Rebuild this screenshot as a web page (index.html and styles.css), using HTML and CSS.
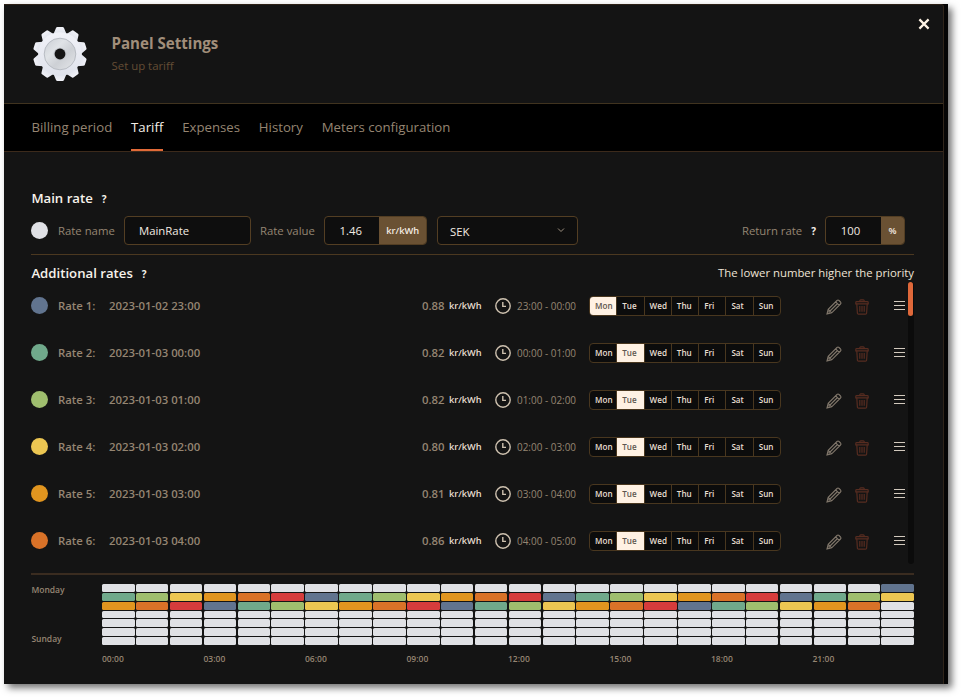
FILE: index.html
```html
<!DOCTYPE html>
<html lang="en">
<head>
<meta charset="utf-8">
<title>Panel Settings</title>
<link rel="stylesheet" href="styles.css">
</head>
<body>
<svg class="defs" aria-hidden="true">
  <symbol id="clock" viewBox="0 0 16 16"><circle cx="8" cy="8" r="7.2"/><path d="M7.8 4V8.4H11"/></symbol>
  <symbol id="pencil" viewBox="0 0 16 16"><path d="M1 15 2.2 10.3 11 1.5Q12 .6 13 1.5L14.5 3Q15.4 4 14.5 5L5.7 13.8ZM2.2 10.3 5.7 13.8M9.7 2.8 13.2 6.3M4 12 11.5 4.5M2.5 12.5 3.5 13.5"/></symbol>
  <symbol id="trash" viewBox="0 0 14 16"><path d="M4.8 2.6V1.7Q4.8.8 5.7.8H8.3Q9.2.8 9.2 1.7V2.6M1.7 2.7H12.3Q13.2 2.7 13.2 3.5V4.8H.8V3.5Q.8 2.7 1.7 2.7ZM1.8 5 2.4 14.3Q2.5 15.2 3.4 15.2H10.6Q11.5 15.2 11.6 14.3L12.2 5M4.8 7V12.8M7 7V12.8M9.2 7V12.8"/></symbol>
</svg>
<div class="screen">
  <main class="dialog">
    <header class="header">
      <svg class="gear" viewBox="-28 -28 56 56">
        <defs>
          <linearGradient id="metal" x1="0" y1="0" x2="0" y2="1"><stop offset="0" stop-color="#f1f2f8"/><stop offset="1" stop-color="#e0e3ec"/></linearGradient>
          <linearGradient id="disc" x1="0" y1="0" x2="1" y2="1"><stop offset="0" stop-color="#c9cdd3"/><stop offset=".35" stop-color="#e0e3e7"/><stop offset=".6" stop-color="#cdd0d5"/><stop offset="1" stop-color="#e5e7ea"/></linearGradient>
          <path id="tooth" d="M-6.5-20-4-26Q-3.6-27-2.6-27H2.6Q3.6-27 4-26L6.5-20Z"/>
        </defs>
        <g fill="url(#metal)">
          <use href="#tooth"/><use href="#tooth" transform="rotate(36)"/><use href="#tooth" transform="rotate(72)"/><use href="#tooth" transform="rotate(108)"/><use href="#tooth" transform="rotate(144)"/><use href="#tooth" transform="rotate(180)"/><use href="#tooth" transform="rotate(216)"/><use href="#tooth" transform="rotate(252)"/><use href="#tooth" transform="rotate(288)"/><use href="#tooth" transform="rotate(324)"/>
          <circle r="21.8"/>
        </g>
        <circle r="15.8" fill="url(#disc)" stroke="#b9bdc4"/>
        <circle r="6.3" fill="#c3c6cc"/><circle r="5.4" fill="#151515"/>
      </svg>
      <div class="heading"><h1>Panel Settings</h1><p>Set up tariff</p></div>
      <svg class="close" viewBox="0 0 12 12"><path d="M1.4 1.4 10.6 10.6M10.6 1.4 1.4 10.6"/></svg>
    </header>
    <nav class="tabs"><a>Billing period</a><a class="active">Tariff</a><a>Expenses</a><a>History</a><a>Meters configuration</a></nav>
    <section class="content">
      <h2>Main rate <b>?</b></h2>
      <div class="main-rate">
        <i class="dot c0"></i><label class="name-label">Rate name</label><div class="field name">MainRate</div>
        <label class="value-label">Rate value</label><div class="field value"><span>1.46</span><em>kr/kWh</em></div>
        <div class="field select"><span>SEK</span><svg viewBox="0 0 8 6"><path d="M1 1.5 4 4.5 7 1.5"/></svg></div>
        <label class="return-label">Return rate</label><b class="help">?</b><div class="field return"><span>100</span><em>%</em></div>
      </div>
      <div class="additional"><h2>Additional rates <b>?</b></h2><p>The lower number higher the priority</p></div>
      <div class="rates"><div class="rate-list" id="rates"></div><div class="track"><div class="thumb"></div></div></div>
      <div class="schedule">
        <div class="day-labels"><span>Monday</span><span>Sunday</span></div>
        <div class="chart"><div class="cells" id="cells"></div><div class="hours" id="hours"></div></div>
      </div>
    </section>
  </main>
</div>
<script src="script.js"></script>
</body>
</html>
```
FILE: styles.css
```css
* { box-sizing: border-box; margin: 0; padding: 0; }
body { width: 961px; height: 697px; padding: 4px; overflow: hidden; background: #fff; font-family: "Open Sans", sans-serif; color: #958572; }
h1, h2, p, b, i, em { font-style: normal; }
.defs { display: none; }
.screen { width: 944px; height: 680px; background: #050505; box-shadow: 4px 4px 7px rgba(0,0,0,.55); }
.dialog { width: 940px; height: 680px; background: #141414; border-top: 1px solid #2d2117; border-right: 1px solid #30251b; border-top-right-radius: 3px; }
.header { height: 98px; display: flex; align-items: flex-start; padding: 21px 13px 0 28px; }
.gear { width: 56px; height: 56px; }
.heading { margin-left: 23.5px; padding-top: 6.5px; flex: 1; }
.heading h1 { font-size: 15.1px; line-height: 20px; font-weight: 700; color: #a18e7a; }
.heading p { font-size: 11.4px; line-height: 16px; margin-top: 5px; color: #644d34; }
.close { width: 12px; height: 12px; margin-top: -8px; fill: none; stroke: #fff4e5; stroke-width: 2.2; }
.tabs { height: 49px; display: flex; gap: 18.9px; padding-left: 27.5px; background: #000; border-top: 1px solid #40331f; border-bottom: 1px solid #3c2a1b; font-size: 13.2px; line-height: 46px; }
.tabs a { height: 47px; white-space: nowrap; }
.tabs .active { color: #f4eee7; border-bottom: 2px solid #e16a38; }
.content { padding: 37px 29px 0 27px; }
h2 { padding-left: .4px; font-size: 13.2px; line-height: 18px; font-weight: 600; color: #f7f2eb; }
h2 b, .help { font-size: 10px; font-weight: 700; color: #f7f2eb; margin-left: 5.5px; }
.main-rate { height: 47px; padding-bottom: 1px; display: flex; align-items: center; border-bottom: 1px solid #4b3820; font-size: 11.35px; }
.dot { width: 17px; height: 17px; border-radius: 50%; flex: none; }
.name-label { width: 66px; margin-left: 10px; }
.value-label { width: 64px; margin-left: 9px; }
.field { height: 29px; border: 1px solid #533e23; border-radius: 4px; background: #0e0e0e; color: #f2ebe2; display: flex; align-items: center; overflow: hidden; }
.field.name { width: 127px; padding-left: 14px; }
.field em { align-self: stretch; display: flex; align-items: center; justify-content: center; background: #6a5133; font-size: 9.3px; font-weight: 600; }
.field.value { width: 103px; }
.field.value span { width: 55px; text-align: center; padding-right: 3px; }
.field.value em { width: 47px; }
.field.select { width: 141px; margin-left: 10px; padding: 2px 12px 0 12px; justify-content: space-between; }
.select svg { width: 8px; height: 6px; margin-top: -3px; fill: none; stroke: #9d9080; }
.return-label { margin-left: auto; }
.help { margin-left: 9px; }
.field.return { width: 80px; margin: 0 9px 0 9px; }
.field.return span { width: 55px; text-align: center; padding-right: 6px; }
.field.return em { flex: 1; }
.additional { height: 27px; padding-top: 9px; display: flex; justify-content: space-between; }
.additional p { font-size: 11.35px; line-height: 18px; color: #eee4d7; }
.rates { height: 293px; display: flex; border-bottom: 2px solid #3a2c20; }
.rate-list { width: 875px; }
.rate { height: 47px; display: flex; align-items: center; font-size: 11.35px; font-weight: 600; }
.rate .title { width: 51px; margin-left: 10px; }
.rate .date { width: 313px; }
.rate .price { width: 27px; }
.rate .unit { width: 46px; font-size: 9.2px; color: #e6dccf; }
.clock { width: 16px; height: 16px; fill: none; stroke: #cfc2b0; stroke-width: 1.4; }
.rate .time { width: 73px; margin-left: 6px; font-size: 9.95px; font-weight: 400; white-space: nowrap; }
.days { width: 192px; height: 20px; display: flex; border: 1px solid #49371f; border-radius: 4px; overflow: hidden; background: #0c0c0c; color: #e8ded1; font-size: 8.1px; line-height: 18px; margin-left: -1px; }
.days span { flex: 1; padding-left: 5px; border-left: 1px solid #49371f; }
.days span:first-child { border-left: 0; }
.days .on { background: #fff1e3; color: #5e564e; }
.pencil { width: 16px; height: 16px; margin: 3px 0 0 45px; fill: none; stroke: #81776b; stroke-width: 1.1; }
.trash { width: 14px; height: 16px; margin: 3px 0 0 13px; fill: none; stroke: #572c20; stroke-width: 1.2; }
.menu { width: 11px; height: 9px; margin-left: 25px; border-top: 1px solid #d2c9bd; border-bottom: 1px solid #d2c9bd; display: flex; align-items: center; }
.menu::before { content: ""; flex: 1; height: 1px; background: #d2c9bd; }
.track { width: 6px; height: 282px; margin-left: auto; border-radius: 3px; background: #0b0b0b; }
.thumb { width: 5px; height: 34px; border-radius: 3px; background: #df683a; }
.schedule { display: flex; padding-top: 9px; font-size: 8.5px; font-weight: 600; line-height: 12px; }
.day-labels { width: 71px; padding-left: .4px; height: 61px; display: flex; flex-direction: column; justify-content: space-between; }
.chart { flex: 1; }
.cells { height: 61px; display: grid; grid-template-columns: repeat(24, 1fr); grid-template-rows: repeat(7, 1fr); gap: 1px 1.3px; }
.cells i { border-radius: 1.5px; }
.hours { display: grid; grid-template-columns: repeat(8, 1fr); margin-top: 8px; }
.c0 { background: #e0e1e5; }
.c1 { background: #61748f; }
.c2 { background: #70a98b; }
.c3 { background: #9fbe6e; }
.c4 { background: #ecc652; }
.c5 { background: #e1951f; }
.c6 { background: #d97228; }
.c7 { background: #d63c3c; }
```
FILE: script.js
```js
const weekdays = ["Mon", "Tue", "Wed", "Thu", "Fri", "Sat", "Sun"];
const rates = [
  ["2023-01-02 23:00", "0.88", "23:00 - 00:00", 0],
  ["2023-01-03 00:00", "0.82", "00:00 - 01:00", 1],
  ["2023-01-03 01:00", "0.82", "01:00 - 02:00", 1],
  ["2023-01-03 02:00", "0.80", "02:00 - 03:00", 1],
  ["2023-01-03 03:00", "0.81", "03:00 - 04:00", 1],
  ["2023-01-03 04:00", "0.86", "04:00 - 05:00", 1]
];
document.getElementById("rates").innerHTML = rates.map(([date, price, time, day], i) =>
  `<div class="rate"><i class="dot c${i + 1}"></i><span class="title">Rate ${i + 1}:</span><span class="date">${date}</span>
  <span class="price">${price}</span><span class="unit">kr/kWh</span><svg class="clock"><use href="#clock"/></svg><span class="time">${time}</span>
  <div class="days">${weekdays.map((d, n) => `<span class="${n === day ? "on" : ""}">${d}</span>`).join("")}</div>
  <svg class="pencil"><use href="#pencil"/></svg><svg class="trash"><use href="#trash"/></svg><div class="menu"></div></div>`).join("");

// One digit per hour: the index of the rate colour
const week = [
  "000000000000000000000001",
  "234567123456712345671234",
  "567123456712345671234560",
  ...Array(4).fill("0".repeat(24))
];
document.getElementById("cells").innerHTML = week.join("").split("").map(c => `<i class="c${c}"></i>`).join("");
document.getElementById("hours").innerHTML = [0, 3, 6, 9, 12, 15, 18, 21].map(h => `<span>${String(h).padStart(2, "0")}:00</span>`).join("");
```
